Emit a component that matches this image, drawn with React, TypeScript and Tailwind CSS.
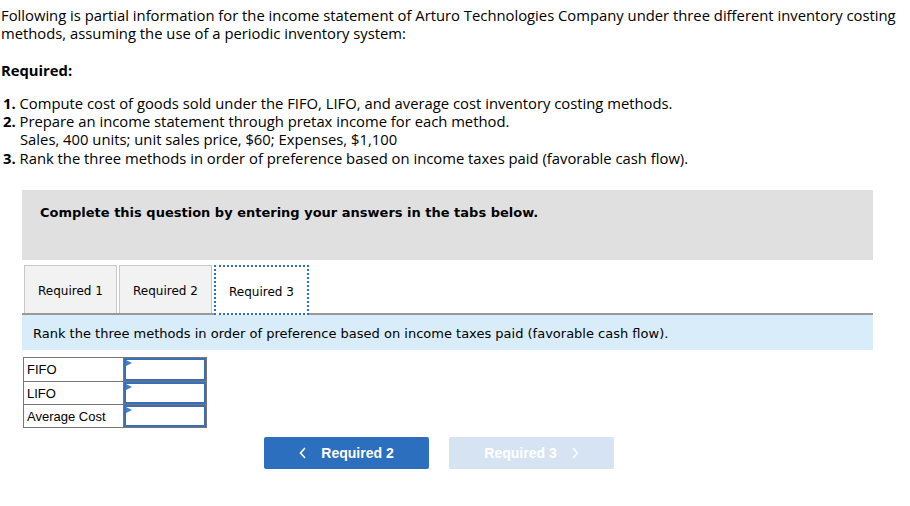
import React from "react";

export default function App() {
  const rows = ["FIFO", "LIFO", "Average Cost"];
  return (
    <div className="w-[910px] h-[506px] bg-white text-black overflow-hidden relative">
      <div className="text-[14.8px] leading-[18px] pt-[6px] pl-[1px]" style={{ fontFamily: "'Open Sans', Lato, sans-serif" }}>
        <p>
          Following is partial information for the income statement of Arturo Technologies Company under three different inventory costing methods, assuming the use of a periodic inventory system:
        </p>
        <p className="font-bold mt-[19px]">Required:</p>
        <div className="mt-[15px] pl-[2px]">
          <div><b>1.</b> Compute cost of goods sold under the FIFO, LIFO, and average cost inventory costing methods.</div>
          <div><b>2.</b> Prepare an income statement through pretax income for each method.</div>
          <div className="pl-[17px]">Sales, 400 units; unit sales price, $60; Expenses, $1,100</div>
          <div className="mt-[1px]"><b>3.</b> Rank the three methods in order of preference based on income taxes paid (favorable cash flow).</div>
        </div>
      </div>

      <div className="ml-[22px] w-[851px] mt-[23px]" style={{ fontFamily: "'DejaVu Sans', Verdana, sans-serif" }}>
        <div className="h-[70px] bg-[#e0e0e0] pl-[18px] pt-[13px] text-[13px] font-bold">
          Complete this question by entering your answers in the tabs below.
        </div>
        <div className="flex items-end h-[55px] pl-[2px] gap-[2px] border-b-2 border-[#999]">
          <div className="w-[93px] h-[48px] pt-[3px] bg-[#f2f2f2] border border-b-0 border-[#c8c8c8] flex items-center justify-center text-[12px]">Required 1</div>
          <div className="w-[93px] h-[48px] pt-[3px] bg-[#f2f2f2] border border-b-0 border-[#c8c8c8] flex items-center justify-center text-[12px]">Required 2</div>
          <div className="w-[95px] h-[50px] pt-[3px] bg-white border-2 border-dotted border-[#2d72c9] -mb-[2px] flex items-center justify-center text-[12px]">Required 3</div>
        </div>
        <div className="h-[35px] bg-[#d9ecfa] pl-[11px] pt-[3px] flex items-center text-[13px]">
          Rank the three methods in order of preference based on income taxes paid (favorable cash flow).
        </div>
        <div className="mt-[7px] ml-[1px] w-[184px] border border-[#777]" style={{ fontFamily: "'Liberation Sans', Arial, sans-serif" }}>
          {rows.map((r, i) => (
            <div key={r} className={`flex h-[23px] ${i > 0 ? "border-t border-[#777]" : ""}`}>
              <div className="w-[100px] border-r border-[#777] pl-[3px] text-[13px] leading-[23px]">{r}</div>
              <div className="flex-1 relative border-2 border-[#3a6fb7]">
                <svg className="absolute left-0 top-0" width="6" height="6" viewBox="0 0 6 6">
                  <polygon points="0,0 6,3 0,6" fill="#3a7fd0" />
                </svg>
              </div>
            </div>
          ))}
        </div>
        <div className="flex mt-[9px] ml-[242px] gap-[20px]" style={{ fontFamily: "'Liberation Sans', Arial, sans-serif" }}>
          <div className="w-[165px] h-[32px] bg-[#2c6fbe] rounded-[2px] text-white font-bold text-[14px] flex items-center justify-center gap-[14px]">
            <svg width="8" height="12" viewBox="0 0 8 12"><path d="M6 1 L1.5 6 L6 11" stroke="white" strokeWidth="1.6" fill="none" /></svg>
            <span>Required 2</span>
          </div>
          <div className="w-[165px] h-[32px] bg-[#d6e3f3] rounded-[2px] text-white font-bold text-[14px] flex items-center justify-center gap-[14px]">
            <span>Required 3</span>
            <svg width="8" height="12" viewBox="0 0 8 12"><path d="M2 1 L6.5 6 L2 11" stroke="white" strokeWidth="1.6" fill="none" /></svg>
          </div>
        </div>
      </div>
    </div>
  );
}
